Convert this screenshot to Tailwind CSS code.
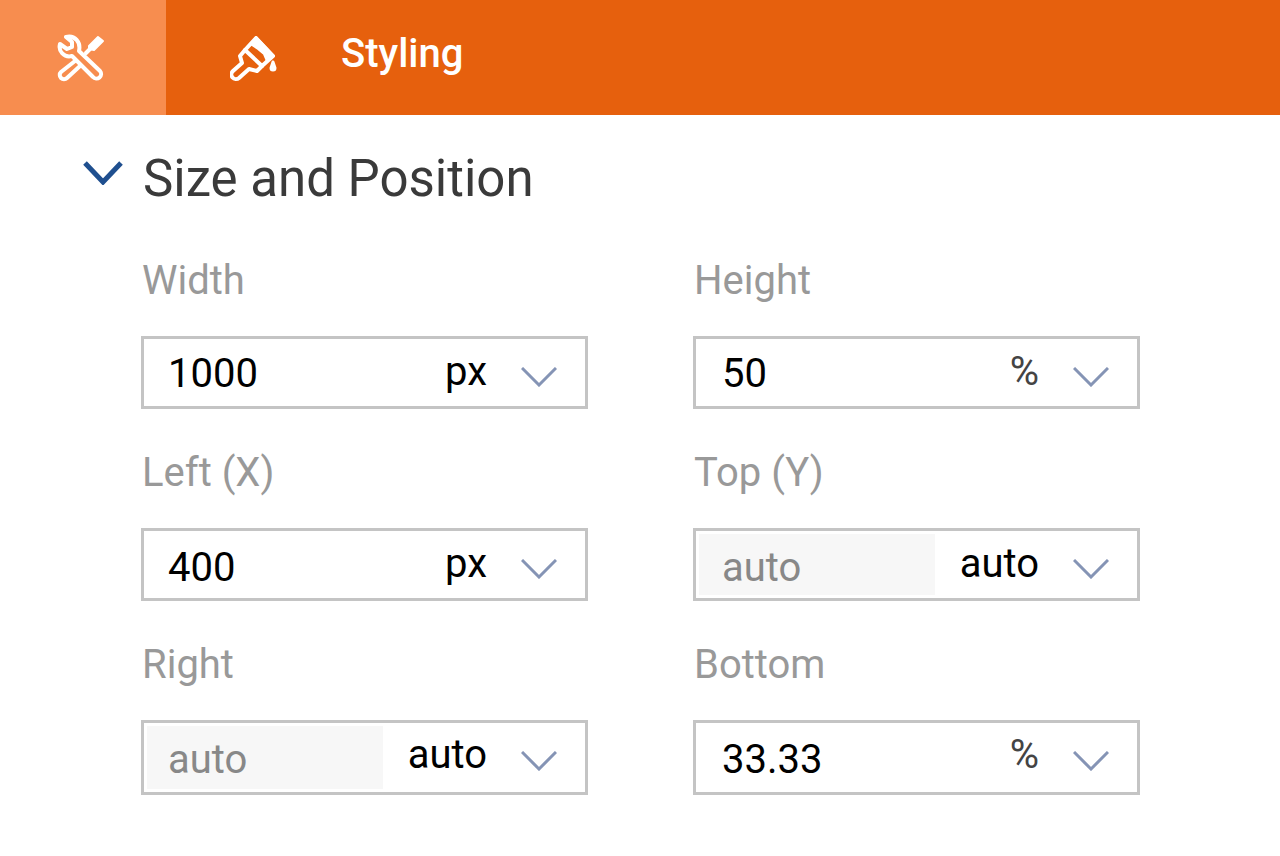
<!DOCTYPE html>
<html lang="en">
<head>
    <meta charset="UTF-8">
    <meta name="viewport" content="width=device-width, initial-scale=1.0">
    <title>Styling</title>
    <script src="https://cdn.jsdelivr.net/npm/@tailwindcss/browser@4"></script>
</head>
<body class="bg-white font-[Roboto,'Noto_Sans',sans-serif] text-[40px] leading-[48px] text-black">

    <!-- Tabs -->
    <nav class="flex h-[115px] bg-[#e6600d] text-white">
        <button type="button" aria-label="Properties" class="flex w-[166px] items-center justify-center bg-[#f78d4f] pr-1">
            <svg class="size-12" viewBox="0 0 48 48" fill="none" stroke="currentColor" stroke-width="4" stroke-linejoin="round" stroke-linecap="round">
                <path d="M29 19L34 14" />
                <path d="M41 3L46 7L37 16L32 15L32 12Z" fill="currentColor" stroke-width="2" />
                <path d="M18 27L4 38A4 4 0 0 0 10 44L23 32" />
                <path d="M9 3L15 8V13L10 15L3 10C1 17 7 24 15 22L36 43A4 4 0 0 0 43 37L22 17C24 8 18 1 9 3Z" />
            </svg>
        </button>
        <button type="button" class="flex items-center pl-16">
            <svg class="size-12" viewBox="0 0 48 48" fill="none" stroke="currentColor" stroke-width="4" stroke-linejoin="round" stroke-linecap="round">
                <path d="M26 4L43 22L32 32L15 16Z" />
                <path d="M26 3L44 22L37 27L34 20L28 15L22 11Z" fill="currentColor" stroke-width="2" />
                <path d="M15 16L10 22L12 29L3 37A4 4 0 0 0 9 44L19 35L27 37L32 32" />
                <path d="M43 28L41 34A2 2 0 0 0 45 34Z" fill="currentColor" stroke-width="3" />
            </svg>
            <span class="pb-2 pl-[63px] font-medium">Styling</span>
        </button>
    </nav>

    <main class="pt-8 pr-[140px] pl-[141px]">
        <!-- Section header -->
        <h2 class="-ml-[58px] text-[51px] leading-[64px] text-[#3a3a3a]">
            <button type="button" aria-expanded="true" class="flex items-center gap-5">
                <svg class="mb-3 h-6 w-10" viewBox="0 0 40 24" fill="none" stroke="#1f4f8f" stroke-width="5">
                    <path d="M2 2L20 21L38 2" />
                </svg>
                Size and Position
            </button>
        </h2>

        <!-- Fields -->
        <form class="grid grid-cols-2 gap-x-[105px] gap-y-10 pt-[46px]">
            <div>
                <label for="width" class="block pl-px text-[#999999]">Width</label>
                <div class="relative mt-[31px] flex h-[73px] border-3 border-[#c4c4c4]">
                    <input type="text" id="width" value="1000" class="w-0 flex-1 pt-0.5 pl-6">
                    <select aria-label="Width unit" class="w-[202px] appearance-none pr-[98px] pb-0.5 [text-align-last:right]">
                        <option>px</option>
                        <option>%</option>
                        <option>auto</option>
                    </select>
                    <svg class="pointer-events-none absolute top-7 right-7 h-5 w-9" viewBox="0 0 36 20" fill="none" stroke="#8594b5" stroke-width="3">
                        <path d="M1 1L18 18L35 1" />
                    </svg>
                </div>
            </div>
            <div>
                <label for="height" class="block pl-px text-[#999999]">Height</label>
                <div class="relative mt-[31px] flex h-[73px] border-3 border-[#c4c4c4]">
                    <input type="text" id="height" value="50" class="w-0 flex-1 pt-0.5 pl-[26px]">
                    <select aria-label="Height unit" class="w-[202px] appearance-none pr-[98px] pb-0.5 text-[#444444] [text-align-last:right]">
                        <option>%</option>
                        <option>px</option>
                        <option>auto</option>
                    </select>
                    <svg class="pointer-events-none absolute top-7 right-7 h-5 w-9" viewBox="0 0 36 20" fill="none" stroke="#8594b5" stroke-width="3">
                        <path d="M1 1L18 18L35 1" />
                    </svg>
                </div>
            </div>
            <div>
                <label for="left" class="block pl-px text-[#999999]">Left (X)</label>
                <div class="relative mt-[31px] flex h-[73px] border-3 border-[#c4c4c4]">
                    <input type="text" id="left" value="400" class="w-0 flex-1 pt-1.5 pl-6">
                    <select aria-label="Left unit" class="w-[202px] appearance-none pr-[98px] pb-0.5 [text-align-last:right]">
                        <option>px</option>
                        <option>%</option>
                        <option>auto</option>
                    </select>
                    <svg class="pointer-events-none absolute top-7 right-7 h-5 w-9" viewBox="0 0 36 20" fill="none" stroke="#8594b5" stroke-width="3">
                        <path d="M1 1L18 18L35 1" />
                    </svg>
                </div>
            </div>
            <div>
                <label for="top" class="block pl-px text-[#999999]">Top (Y)</label>
                <div class="relative mt-[31px] flex h-[73px] border-3 border-[#c4c4c4]">
                    <input type="text" id="top" value="auto" disabled class="my-[3px] ml-[3px] w-0 flex-1 bg-[#f7f7f7] pt-1.5 pl-[23px] text-[#888888]">
                    <select aria-label="Top unit" class="w-[202px] appearance-none pr-[98px] pb-0.5 [text-align-last:right]">
                        <option>auto</option>
                        <option>px</option>
                        <option>%</option>
                    </select>
                    <svg class="pointer-events-none absolute top-7 right-7 h-5 w-9" viewBox="0 0 36 20" fill="none" stroke="#8594b5" stroke-width="3">
                        <path d="M1 1L18 18L35 1" />
                    </svg>
                </div>
            </div>
            <div>
                <label for="right" class="block pl-px text-[#999999]">Right</label>
                <div class="relative mt-[31px] flex h-[75px] border-3 border-[#c4c4c4]">
                    <input type="text" id="right" value="auto" disabled class="my-[3px] ml-[3px] w-0 flex-1 bg-[#f7f7f7] pt-1 pl-[21px] text-[#888888]">
                    <select aria-label="Right unit" class="w-[202px] appearance-none pr-[98px] pb-1.5 [text-align-last:right]">
                        <option>auto</option>
                        <option>px</option>
                        <option>%</option>
                    </select>
                    <svg class="pointer-events-none absolute top-7 right-7 h-5 w-9" viewBox="0 0 36 20" fill="none" stroke="#8594b5" stroke-width="3">
                        <path d="M1 1L18 18L35 1" />
                    </svg>
                </div>
            </div>
            <div>
                <label for="bottom" class="block pl-px text-[#999999]">Bottom</label>
                <div class="relative mt-[31px] flex h-[75px] border-3 border-[#c4c4c4]">
                    <input type="text" id="bottom" value="33.33" class="w-0 flex-1 pt-1 pl-[26px]">
                    <select aria-label="Bottom unit" class="w-[202px] appearance-none pr-[98px] pb-1.5 text-[#444444] [text-align-last:right]">
                        <option>%</option>
                        <option>px</option>
                        <option>auto</option>
                    </select>
                    <svg class="pointer-events-none absolute top-7 right-7 h-5 w-9" viewBox="0 0 36 20" fill="none" stroke="#8594b5" stroke-width="3">
                        <path d="M1 1L18 18L35 1" />
                    </svg>
                </div>
            </div>
        </form>
    </main>
</body>
</html>
